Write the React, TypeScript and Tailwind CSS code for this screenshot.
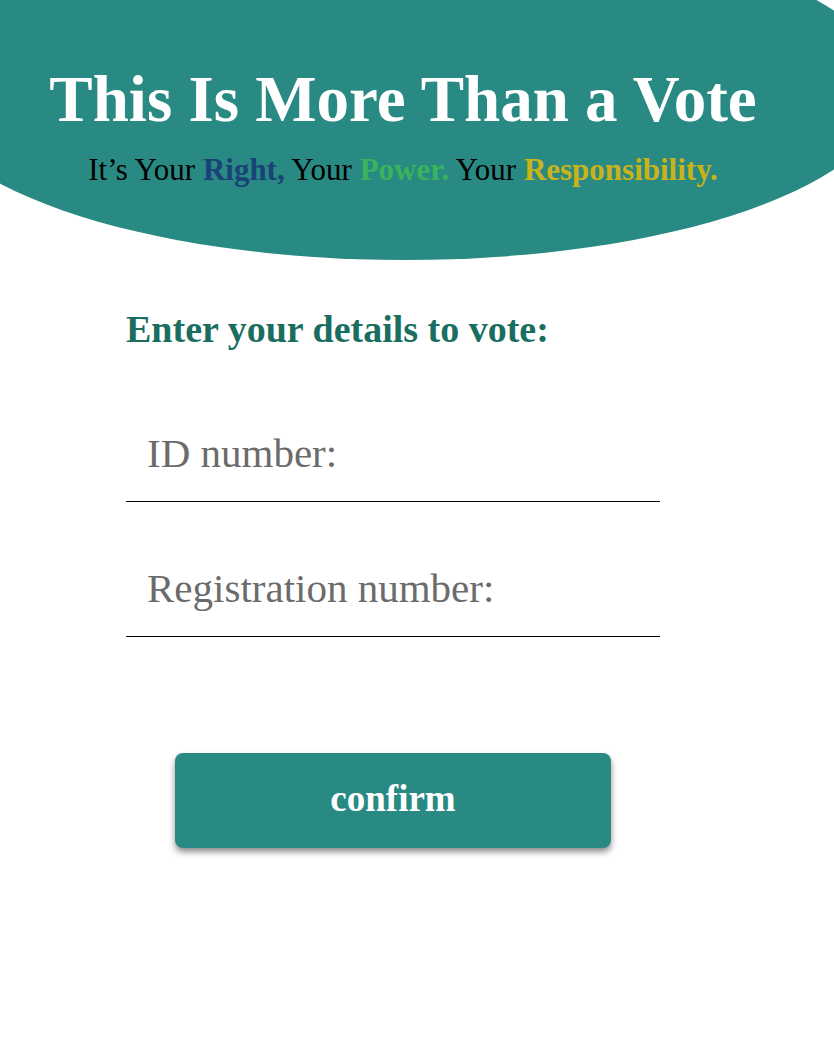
import React from "react";

export default function App() {
  return (
    <div
      className="w-full min-h-[1037px] bg-white overflow-hidden"
      style={{ fontFamily: '"Liberation Serif", "DejaVu Serif", serif' }}
    >
      <header className="-ml-[80px] -mt-[80px] w-[970px] h-[340px] rounded-[50%] bg-[#288a82]">
        <div className="ml-[80px] w-[834px] pr-[28px] pt-[147px] flex flex-col items-center">
          <h1 className="text-[65px] leading-[65px] font-bold text-white whitespace-nowrap">
            This Is More Than a Vote
          </h1>
          <p className="mt-[23px] text-[31px] leading-[30px] text-black whitespace-nowrap">
            It’s Your <span className="font-bold text-[#1b4278]">Right,</span> Your{" "}
            <span className="font-bold text-[#3bb35c]">Power.</span> Your{" "}
            <span className="font-bold text-[#cab318]">Responsibility.</span>
          </p>
        </div>
      </header>

      <main className="ml-[126px] w-[534px] flex flex-col">
        <h2 className="mt-[50px] text-[38px] leading-[38px] font-bold text-[#1a6e5f] whitespace-nowrap">
          Enter your details to vote:
        </h2>
        <input
          type="text"
          placeholder="ID number:"
          className="mt-[74px] h-[80px] pb-[18px] pl-[21px] w-full border-b border-black bg-transparent text-[41px] text-[#333] placeholder:text-[#6b6b6b] outline-none"
        />
        <input
          type="text"
          placeholder="Registration number:"
          className="mt-[55px] h-[80px] pb-[18px] pl-[21px] w-full border-b border-black bg-transparent text-[41px] text-[#333] placeholder:text-[#6b6b6b] outline-none"
        />
        <div className="mt-[116px] flex justify-center">
          <button className="w-[436px] h-[95px] rounded-[8px] bg-[#288a82] pb-[4px] text-white text-[37px] font-bold shadow-[0_4px_6px_rgba(0,0,0,0.45)]">
            confirm
          </button>
        </div>
      </main>
    </div>
  );
}
